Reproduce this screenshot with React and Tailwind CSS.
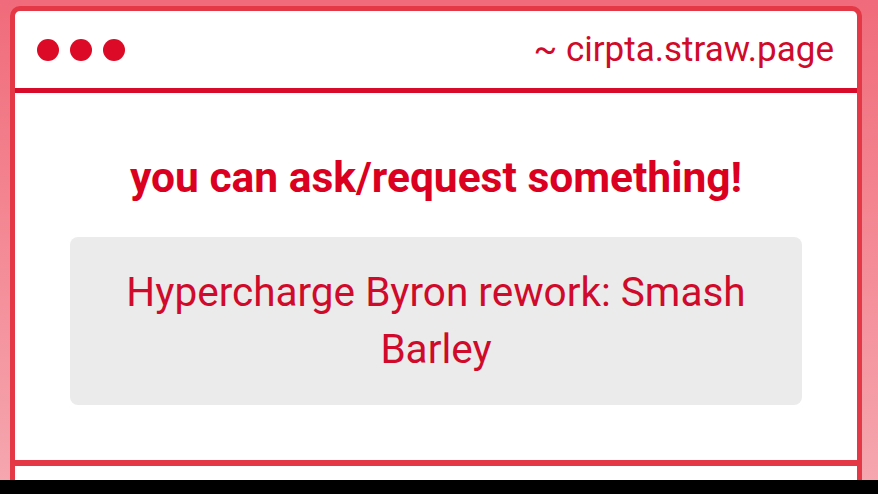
import React from 'react';

const App = () => {
  return (
    <div className="w-[878px] h-[494px] flex flex-col overflow-hidden" style={{ fontFamily: 'Roboto, "Liberation Sans", sans-serif' }}>
      <div className="h-[480px] overflow-hidden bg-gradient-to-b from-[#f06b7b] to-[#f5a6af] pl-[10px] pt-[6px]">
        <div className="w-[852px] h-[520px] bg-white border-[5px] border-[#e43846] rounded-[10px] flex flex-col">
          <div className="h-[82px] shrink-0 flex items-center justify-between pl-[22px] pr-[23px] border-b-[5px] border-[#d80b2a]">
            <div className="flex items-center gap-[11px]">
              <span className="w-[22px] h-[22px] rounded-full bg-[#dc0a26]" />
              <span className="w-[22px] h-[22px] rounded-full bg-[#dc0a26]" />
              <span className="w-[22px] h-[22px] rounded-full bg-[#dc0a26]" />
            </div>
            <span className="text-[35px] text-[#d00a2a] leading-none">~ cirpta.straw.page</span>
          </div>
          <div className="flex flex-col items-center pt-[60px]">
            <h1 className="text-[42.5px] font-bold leading-[50px] text-[#dc0020]">you can ask/request something!</h1>
            <div className="mt-[34px] w-[732px] h-[168px] bg-[#ecebec] rounded-[8px] px-[40px] flex items-center justify-center">
              <p className="text-[40.5px] leading-[57px] text-[#d00a2a] text-center">Hypercharge Byron rework: Smash Barley</p>
            </div>
          </div>
          <div className="mt-[55px] border-t-[6px] border-[#e43846] flex-1" />
        </div>
      </div>
      <div className="h-[14px] bg-black" />
    </div>
  );
};

export default App;
